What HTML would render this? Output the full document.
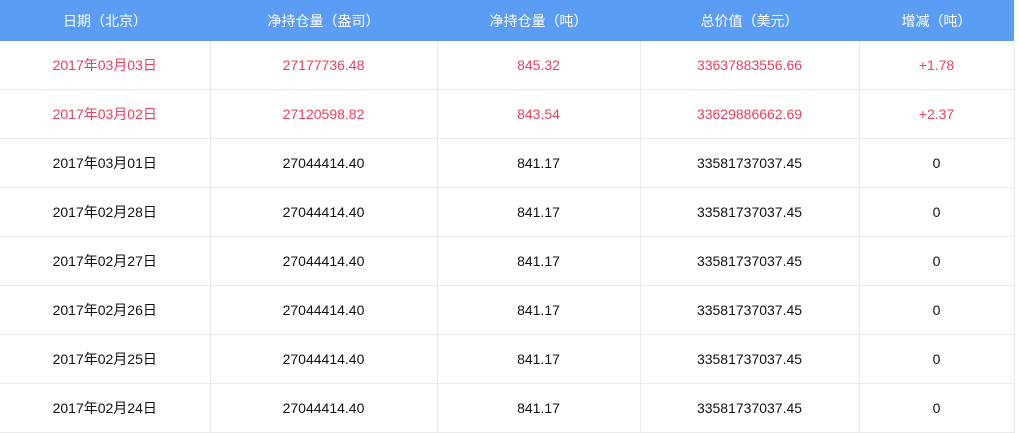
<!DOCTYPE html><html><head><meta charset="utf-8"><style>
body{margin:0;background:#fff;font-family:"Liberation Sans","Noto Sans CJK SC",sans-serif;}
table{border-collapse:collapse;width:1014px;table-layout:fixed;font-size:14px;}
th{background:#5b9cf4;color:#fff;font-weight:normal;height:41px;padding:0;}
td{height:48px;padding:0;text-align:center;color:#111;border-right:1px solid #eaeaea;border-bottom:1px solid #eaeaea;}
tr.r td{color:#e8405f;}
</style></head><body><table>
<colgroup><col style="width:210px"><col style="width:227px"><col style="width:203px"><col style="width:219px"><col style="width:155px"></colgroup>
<tr><th>日期（北京）</th><th>净持仓量（盎司）</th><th>净持仓量（吨）</th><th>总价值（美元）</th><th>增减（吨）</th></tr>
<tr class="r"><td>2017年03月03日</td><td>27177736.48</td><td>845.32</td><td>33637883556.66</td><td>+1.78</td></tr>
<tr class="r"><td>2017年03月02日</td><td>27120598.82</td><td>843.54</td><td>33629886662.69</td><td>+2.37</td></tr>
<tr><td>2017年03月01日</td><td>27044414.40</td><td>841.17</td><td>33581737037.45</td><td>0</td></tr>
<tr><td>2017年02月28日</td><td>27044414.40</td><td>841.17</td><td>33581737037.45</td><td>0</td></tr>
<tr><td>2017年02月27日</td><td>27044414.40</td><td>841.17</td><td>33581737037.45</td><td>0</td></tr>
<tr><td>2017年02月26日</td><td>27044414.40</td><td>841.17</td><td>33581737037.45</td><td>0</td></tr>
<tr><td>2017年02月25日</td><td>27044414.40</td><td>841.17</td><td>33581737037.45</td><td>0</td></tr>
<tr><td>2017年02月24日</td><td>27044414.40</td><td>841.17</td><td>33581737037.45</td><td>0</td></tr>
</table></body></html>
